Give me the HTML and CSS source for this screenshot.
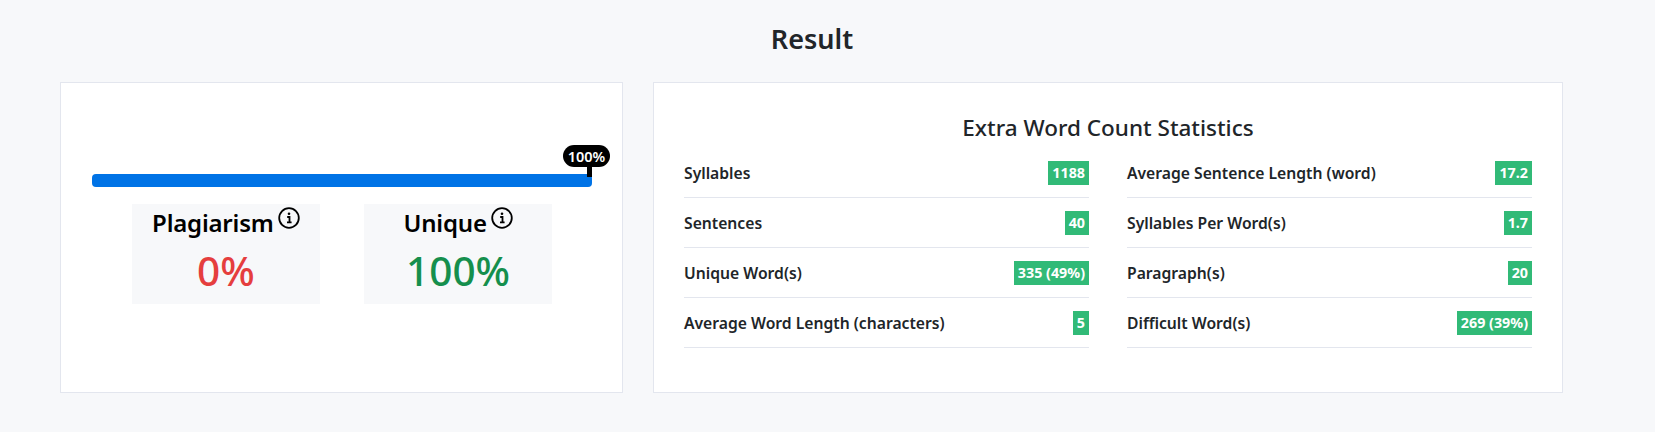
FILE: index.html
```html
<!DOCTYPE html>
<html lang="en">
<head>
<meta charset="utf-8">
<title>Result</title>
<link rel="stylesheet" href="styles.css">
</head>
<body>
<h1 class="page-title">Result</h1>
<div class="cards">
  <section class="card score-card">
    <div class="progress-wrap">
      <div class="progress"><div class="progress-bar"></div></div>
      <span class="tip">100%</span>
      <span class="tip-stem"></span>
    </div>
    <div class="scores">
      <div class="score">
        <div class="score-name">Plagiarism<svg class="info" viewBox="0 0 22 22"><circle cx="11" cy="11" r="9.8"/><circle class="dot" cx="11" cy="6.8" r="1.3"/><path d="M9.2 10h2.3v5.2M9 15.4h4.6"/></svg></div>
        <div class="score-val red">0%</div>
      </div>
      <div class="score">
        <div class="score-name">Unique<svg class="info" viewBox="0 0 22 22"><circle cx="11" cy="11" r="9.8"/><circle class="dot" cx="11" cy="6.8" r="1.3"/><path d="M9.2 10h2.3v5.2M9 15.4h4.6"/></svg></div>
        <div class="score-val green">100%</div>
      </div>
    </div>
  </section>
  <section class="card stats-card">
    <h2 class="stats-title">Extra Word Count Statistics</h2>
    <div class="stats">
      <div class="stat"><span>Syllables</span><b>1188</b></div>
      <div class="stat"><span>Average Sentence Length (word)</span><b>17.2</b></div>
      <div class="stat"><span>Sentences</span><b>40</b></div>
      <div class="stat"><span>Syllables Per Word(s)</span><b>1.7</b></div>
      <div class="stat"><span>Unique Word(s)</span><b>335 (49%)</b></div>
      <div class="stat"><span>Paragraph(s)</span><b>20</b></div>
      <div class="stat"><span>Average Word Length (characters)</span><b>5</b></div>
      <div class="stat"><span>Difficult Word(s)</span><b>269 (39%)</b></div>
    </div>
  </section>
</div>
</body>
</html>
```
FILE: styles.css
```css
* { box-sizing: border-box; }
html, body { margin: 0; height: 100%; }
body {
  background: #f7f8fa;
  font-family: "Noto Sans", "Open Sans", sans-serif;
  color: #212529;
  padding: 20px 92px 0 60px;
  overflow: hidden;
}
.page-title {
  margin: 0 0 20px;
  height: 42px;
  line-height: 38px;
  font-size: 27px;
  font-weight: 600;
  text-align: center;
  padding-left: 1px;
}
.cards { display: flex; gap: 30px; }
.card {
  background: #fff;
  border: 1px solid #e3e6ee;
  height: 311px;
}
.score-card { width: 563px; padding: 91px 30px 0 31px; flex: none; }
.stats-card { flex: 1; padding: 25px 30px 0; }
.progress-wrap { position: relative; }
.progress { height: 13px; border-radius: 4px; background: #e9ecef; overflow: hidden; }
.progress-bar { height: 100%; width: 100%; background: #0073e6; }
.tip {
  position: absolute;
  right: -18px;
  top: -29px;
  width: 47px;
  height: 22px;
  border-radius: 11px;
  background: #000;
  color: #fff;
  font-size: 14.5px;
  font-weight: 600;
  line-height: 22px;
  text-align: center;
}
.tip-stem { position: absolute; right: 0; top: -8px; width: 5px; height: 11px; background: #000; }
.scores { display: flex; justify-content: center; gap: 44.5px; margin-top: 17px; }
.score { width: 187.75px; height: 100px; background: #f7f8fa; text-align: center; }
.score-name {
  height: 44px;
  padding-top: 3px;
  font-size: 24px;
  line-height: 32px;
  font-weight: 600;
  letter-spacing: -0.2px;
  color: #000;
}
.info { width: 22px; height: 22px; margin-left: 4px; vertical-align: 3px; fill: none; stroke: #000; stroke-width: 1.8; }
.info .dot { fill: #000; stroke: none; }
.score-val { font-size: 40.5px; line-height: 46px; font-weight: 500; }
.red { color: #e53e3e; }
.green { color: #158f4d; }
.stats-title { margin: 0; height: 40px; line-height: 40px; font-size: 22.5px; font-weight: 500; text-align: center; }
.stats { display: grid; grid-template-columns: 1fr 1fr; column-gap: 38px; }
.stat {
  display: flex;
  justify-content: space-between;
  align-items: center;
  height: 50px;
  border-bottom: 1px solid #e3e6ee;
  font-size: 15.7px;
  font-weight: 600;
}
.stat b {
  background: #31ba77;
  color: #fff;
  height: 24px;
  line-height: 24px;
  padding: 0 4px;
  font-size: 14.3px;
  font-weight: 700;
}
```
